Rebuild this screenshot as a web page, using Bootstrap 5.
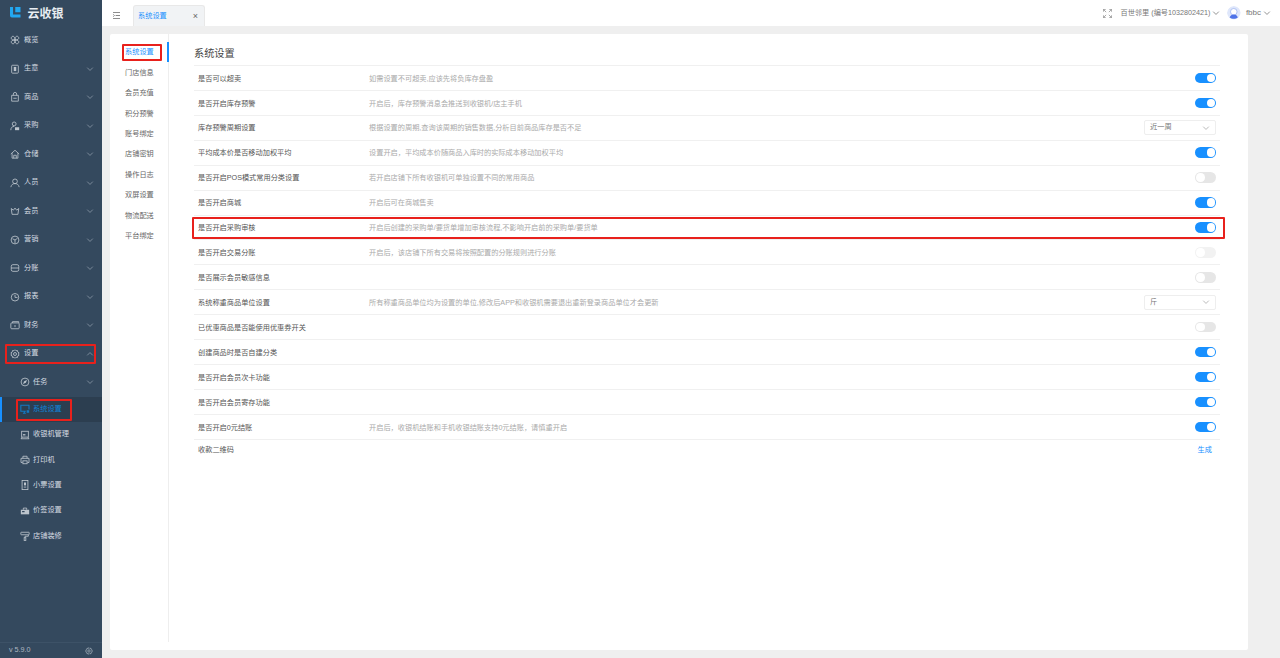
<!DOCTYPE html>
<html lang="zh-CN">
<head>
<meta charset="utf-8">
<title>系统设置</title>
<link rel="stylesheet" href="https://cdn.jsdelivr.net/npm/bootstrap@5.3.0/dist/css/bootstrap.min.css">
<style>
html,body{height:658px;overflow:hidden}
body{font-family:"Liberation Sans","Noto Sans CJK SC",sans-serif;font-size:7.2px;line-height:1.2;color:#555;background:#efefef}
svg{display:block;flex:none}
.shell{height:658px}
.side{width:102px;background:#34495e;color:#d5dbe1}
.logo{height:26px;padding:2px 0 0 10px;gap:7px;color:#e8edf2;font-size:12px;font-weight:700}
.logo-mark{width:10.500px;height:10.500px;margin-top:-3px}
.side-item{height:28.5px;padding:0 8px 0 10px;gap:4px}
.side-item .lbl{flex:1}
.side-item>svg:first-child,.side-sub>svg:first-child{opacity:.85}
.chev-s{color:#8b99a8}
.side-item.annot{position:relative}
.annot-a::after{content:"";position:absolute;left:5px;right:6px;top:4px;bottom:4px;border:2px solid #e8211c;border-radius:1px}
.side-sub{height:25.4px;padding:0 8px 0 19.5px;gap:3.500px;position:relative}
.side-sub.first{height:28.5px}
.side-sub.on{background:#2c3e50;color:#1084d8;box-shadow:inset 2px 0 0 #1890ff}
.annot-b::after{content:"";position:absolute;left:16px;width:56px;top:2px;bottom:1px;border:2px solid #e8211c;border-radius:1px}
.side-foot{height:16px;padding:0 9px;border-top:1px solid #3d5267;color:#aeb8c2}
.tab-pill{width:72px;height:21px;background:#f1f3f5;border:1px solid #e8e8e8;border-bottom:0;border-radius:3px 3px 0 0;padding:0 6px 0 4px;color:#1890ff}
.tab-x{font-size:9px;color:#666;line-height:1}
.top-right{padding-right:9px;color:#777}
.ava{width:13.500px;height:13.500px;border-radius:50%}
.main-wrap{padding:8px 32px 8px 8px;min-height:0}
.panel{background:#fff;border-radius:2px;min-height:0}
.inner-nav{width:59px;height:608px;border-right:1px solid #eee;padding-top:8.500px;position:relative;color:#666}
.inner-nav-item{height:20.4px;padding-left:15px;position:relative}
.inner-nav-item.on{color:#1890ff}
.inner-nav-item.on::before{content:"";position:absolute;right:-1px;top:-.5px;width:2px;height:20px;background:#1890ff}
.inner-nav-item.on::after{content:"";position:absolute;left:12px;width:40px;top:1.500px;height:16.500px;border:2px solid #e8211c;border-radius:1px}
.settings{margin-left:25px;width:1026px;padding-top:8px}
.set-title{font-size:10.2px;color:#444;height:23px;line-height:23px;font-weight:400}
.set-row{height:24.93px;border-top:1px solid #f0f0f0;padding:0 4px;position:relative;color:#555}
.set-name{width:171px;padding-top:2px}
.set-desc{flex:1;color:#aaa;padding-top:2px}
.annot-c::after{content:"";position:absolute;left:-2px;right:-5px;top:1px;bottom:0;border:2px solid #e8211c;border-radius:1px}
.tog{width:21px;height:10.5px;border-radius:6px;background:#1890ff;position:relative;flex:none}
.tog::after{content:"";position:absolute;right:1px;top:1px;width:8.5px;height:8.5px;border-radius:50%;background:#fff}
.tog.off{background:#e6e6e6}
.tog.off::after{right:auto;left:1px}
.tog.dim{background:#f2f2f2}
.sel{width:72px;height:15px;border:1px solid #eee;border-radius:2px;padding:0 5px;color:#777}
.sel svg{color:#aaa}
.set-link{color:#1890ff;padding-right:4px;padding-top:1px}
.set-last{border-top:1px solid #f0f0f0;height:20px;padding:0 4px}
.set-last>span:first-child{padding-top:1px}
</style>
</head>
<body>
<svg width="0" height="0" style="position:absolute">
<defs>
<symbol id="chev" viewBox="0 0 10 10"><path d="M1.5 3.3 5 6.8l3.5-3.5" fill="none" stroke="currentColor" stroke-width="1"/></symbol>
<symbol id="i-over" viewBox="0 0 12 12"><g fill="none" stroke="currentColor" stroke-width="1"><path d="M6 6C2 6 1.5 5 1.5 3.5S3 1.5 3.800 1.500 6 3 6 6C6 2 7.500 1.500 8.500 1.500S10.500 2.500 10.500 3.700 9.500 6 6 6C9.500 6 10.500 7 10.500 8.300S9.500 10.500 8.300 10.500 6 9.500 6 6C6 9.500 5 10.500 3.700 10.500S1.500 9.500 1.500 8.300 2.500 6 6 6Z"/></g></symbol>
<symbol id="i-biz" viewBox="0 0 12 12"><g fill="none" stroke="currentColor" stroke-width="1"><rect x="2" y="1.500" width="8" height="9.500" rx="1"/></g><rect x="4.500" y="3.500" width="3" height="5" fill="currentColor"/></symbol>
<symbol id="i-bag" viewBox="0 0 12 12"><g fill="none" stroke="currentColor" stroke-width="1"><path d="M2 4h8v7H2zM4 4V2.500a2 2 0 0 1 4 0V4M4 7.500h4"/></g></symbol>
<symbol id="i-buy" viewBox="0 0 12 12"><g fill="none" stroke="currentColor" stroke-width="1"><circle cx="5" cy="3.500" r="2.300"/><path d="M1 11c0-3 1.500-4.500 4-4.500"/></g><rect x="6" y="7.500" width="5" height="3.500" fill="currentColor"/></symbol>
<symbol id="i-home" viewBox="0 0 12 12"><g fill="none" stroke="currentColor" stroke-width="1"><path d="M1 6 6 1.500 11 6M2.500 5v6h7V5M4.500 11V7.500h3V11"/></g></symbol>
<symbol id="i-user" viewBox="0 0 12 12"><g fill="none" stroke="currentColor" stroke-width="1"><circle cx="6" cy="4" r="2.800"/><path d="M1 11c.5-3 2.500-4.300 5-4.300S10.500 8 11 11"/></g></symbol>
<symbol id="i-crown" viewBox="0 0 12 12"><g fill="none" stroke="currentColor" stroke-width="1"><path d="M1.500 3 4 5 6 2.500 8 5l2.500-2-1 7h-7z"/></g></symbol>
<symbol id="i-mkt" viewBox="0 0 12 12"><g fill="none" stroke="currentColor" stroke-width="1"><circle cx="6" cy="6" r="4.700"/><path d="M3 4.500 6 6l3-2M6 6v4"/></g></symbol>
<symbol id="i-db" viewBox="0 0 12 12"><g fill="none" stroke="currentColor" stroke-width="1"><rect x="1.500" y="2" width="9" height="8" rx="2"/><path d="M1.500 6h9"/></g></symbol>
<symbol id="i-clock" viewBox="0 0 12 12"><g fill="none" stroke="currentColor" stroke-width="1"><circle cx="6" cy="6.300" r="4.500"/><path d="M6 3.500v3h3"/></g></symbol>
<symbol id="i-wallet" viewBox="0 0 12 12"><g fill="none" stroke="currentColor" stroke-width="1"><rect x="1" y="3.500" width="10" height="7" rx="1"/><path d="M3 3.500V2h7.500v1.500M6 6v2.500"/></g></symbol>
<symbol id="i-gear" viewBox="0 0 12 12"><g fill="none" stroke="currentColor" stroke-width="1"><path d="M6 .9 7.200 2.100 9 1.900 9.300 3.700 10.900 4.600 10.100 6 10.900 7.400 9.300 8.300 9 10.100 7.200 9.900 6 11.100 4.800 9.900 3 10.100 2.700 8.300 1.100 7.400 1.900 6 1.100 4.600 2.700 3.700 3 1.900 4.800 2.100Z"/><circle cx="6" cy="6" r="1.800"/></g></symbol>
<symbol id="i-task" viewBox="0 0 12 12"><g fill="none" stroke="currentColor" stroke-width="1"><circle cx="6" cy="6" r="4.700"/></g><path d="M8.500 3.500 7 7 3.500 8.500 5 5z" fill="currentColor"/></symbol>
<symbol id="i-mon" viewBox="0 0 12 12"><g fill="none" stroke="currentColor" stroke-width="1.300"><path d="M10.800 6.500V1.500H1v7.200h6M3.500 11H7M5.200 9v2"/></g><rect x="8" y="7.500" width="3" height="3" fill="currentColor"/></symbol>
<symbol id="i-pos" viewBox="0 0 12 12"><g fill="none" stroke="currentColor" stroke-width="1"><rect x="2" y="1.500" width="8" height="7"/><path d="M1 10.500h10M2.500 8.500l-1 2M9.500 8.500l1 2"/></g><rect x="3.500" y="5" width="3" height="1.500" fill="currentColor"/></symbol>
<symbol id="i-print" viewBox="0 0 12 12"><g fill="none" stroke="currentColor" stroke-width="1"><path d="M3.500 4V1.500h5V4M3 9H1.200V4h9.600v5H9"/><rect x="3.500" y="7" width="5" height="3.500"/></g></symbol>
<symbol id="i-ticket" viewBox="0 0 12 12"><g fill="none" stroke="currentColor" stroke-width="1"><rect x="2.500" y=".5" width="7" height="11"/></g><rect x="4.800" y="3" width="2.400" height="3.500" fill="currentColor"/><path d="M4.500 8.500h3" stroke="currentColor"/></symbol>
<symbol id="i-tag" viewBox="0 0 12 12"><path d="M1 4.500h10V10H1z" fill="currentColor"/><path d="M4 4.500V2.500h4v2" fill="none" stroke="currentColor"/><rect x="2.500" y="6" width="3" height="1.500" fill="#34495e"/></symbol>
<symbol id="i-roll" viewBox="0 0 12 12"><g fill="none" stroke="currentColor" stroke-width="1"><rect x="1" y="1.500" width="10" height="3" rx=".5"/><path d="M10 4.500V6.300H6V8"/><rect x="5" y="8" width="2" height="3.300"/></g></symbol>
</defs>
</svg>
<div class="shell d-flex">
  <aside class="side d-flex flex-column flex-shrink-0">
    <div class="logo d-flex align-items-center">
      <svg class="logo-mark" viewBox="0 0 11 11"><path d="M0 0h3.200v7.800H11V11H2a2 2 0 0 1-2-2z" fill="#22a7f0"/><path d="M5.500 0H11v5.500H5.500z" fill="#22a7f0"/></svg>
      <span>云收银</span>
    </div>
    <nav class="flex-grow-1">
      <div class="side-item d-flex align-items-center"><svg width="10" height="10"><use href="#i-over"/></svg><span class="lbl">概览</span></div>
      <div class="side-item d-flex align-items-center"><svg width="10" height="10"><use href="#i-biz"/></svg><span class="lbl">生意</span><svg class="chev-s" width="8" height="8"><use href="#chev"/></svg></div>
      <div class="side-item d-flex align-items-center"><svg width="10" height="10"><use href="#i-bag"/></svg><span class="lbl">商品</span><svg class="chev-s" width="8" height="8"><use href="#chev"/></svg></div>
      <div class="side-item d-flex align-items-center"><svg width="10" height="10"><use href="#i-buy"/></svg><span class="lbl">采购</span><svg class="chev-s" width="8" height="8"><use href="#chev"/></svg></div>
      <div class="side-item d-flex align-items-center"><svg width="10" height="10"><use href="#i-home"/></svg><span class="lbl">仓储</span><svg class="chev-s" width="8" height="8"><use href="#chev"/></svg></div>
      <div class="side-item d-flex align-items-center"><svg width="10" height="10"><use href="#i-user"/></svg><span class="lbl">人员</span><svg class="chev-s" width="8" height="8"><use href="#chev"/></svg></div>
      <div class="side-item d-flex align-items-center"><svg width="10" height="10"><use href="#i-crown"/></svg><span class="lbl">会员</span><svg class="chev-s" width="8" height="8"><use href="#chev"/></svg></div>
      <div class="side-item d-flex align-items-center"><svg width="10" height="10"><use href="#i-mkt"/></svg><span class="lbl">营销</span><svg class="chev-s" width="8" height="8"><use href="#chev"/></svg></div>
      <div class="side-item d-flex align-items-center"><svg width="10" height="10"><use href="#i-db"/></svg><span class="lbl">分账</span><svg class="chev-s" width="8" height="8"><use href="#chev"/></svg></div>
      <div class="side-item d-flex align-items-center"><svg width="10" height="10"><use href="#i-clock"/></svg><span class="lbl">报表</span><svg class="chev-s" width="8" height="8"><use href="#chev"/></svg></div>
      <div class="side-item d-flex align-items-center"><svg width="10" height="10"><use href="#i-wallet"/></svg><span class="lbl">财务</span><svg class="chev-s" width="8" height="8"><use href="#chev"/></svg></div>
      <div class="side-item annot annot-a d-flex align-items-center"><svg width="10" height="10"><use href="#i-gear"/></svg><span class="lbl">设置</span><svg class="chev-s" width="8" height="8" style="transform:rotate(180deg)"><use href="#chev"/></svg></div>
      <div class="side-sub first d-flex align-items-center"><svg width="10" height="10"><use href="#i-task"/></svg><span class="lbl flex-grow-1">任务</span><svg class="chev-s" width="8" height="8"><use href="#chev"/></svg></div>
      <div class="side-sub on annot-b d-flex align-items-center"><svg width="10" height="10"><use href="#i-mon"/></svg><span>系统设置</span></div>
      <div class="side-sub d-flex align-items-center"><svg width="10" height="10"><use href="#i-pos"/></svg><span>收银机管理</span></div>
      <div class="side-sub d-flex align-items-center"><svg width="10" height="10"><use href="#i-print"/></svg><span>打印机</span></div>
      <div class="side-sub d-flex align-items-center"><svg width="10" height="10"><use href="#i-ticket"/></svg><span>小票设置</span></div>
      <div class="side-sub d-flex align-items-center"><svg width="10" height="10"><use href="#i-tag"/></svg><span>价签设置</span></div>
      <div class="side-sub d-flex align-items-center"><svg width="10" height="10"><use href="#i-roll"/></svg><span>店铺装修</span></div>
    </nav>
    <div class="side-foot d-flex align-items-center justify-content-between"><span>v 5.9.0</span><svg width="8" height="8"><use href="#i-gear"/></svg></div>
  </aside>
  <div class="flex-grow-1 d-flex flex-column" style="min-width:0">
    <header class="d-flex align-items-end justify-content-between bg-white" style="height:26px">
      <div class="d-flex align-items-end">
        <svg width="7" height="7" viewBox="0 0 8 8" class="align-self-center" style="margin-left:11px"><path d="M0 .5h8M3 4h5M0 7.500h8M0 2.500 1.500 4 0 5.500" fill="none" stroke="#666" stroke-width=".9"/></svg>
        <div class="tab-pill d-flex align-items-center justify-content-between" style="margin-left:13px"><span>系统设置</span><span class="tab-x">×</span></div>
      </div>
      <div class="top-right d-flex align-items-center align-self-center">
        <svg width="9" height="9" viewBox="0 0 10 10" style="margin-right:8px"><path d="M.5 3V.5H3M7 .5h2.500V3M9.500 7v2.500H7M3 9.500H.5V7M.5.5l3 3M9.500.5l-3 3M9.500 9.500l-3-3M.5 9.500l3-3" fill="none" stroke="#888" stroke-width=".8"/></svg>
        <span>百世邻里 (编号1032802421)</span>
        <svg width="8" height="8" style="margin-left:2px;margin-right:7px"><use href="#chev"/></svg>
        <svg class="ava" viewBox="0 0 14 14"><circle cx="7" cy="7" r="7" fill="#dfe7fb"/><circle cx="7" cy="6" r="3.400" fill="#fff" stroke="#8fa8ee" stroke-width=".7"/><path d="M2.800 12c.5-2.400 2.200-3.200 4.200-3.200s3.700.8 4.200 3.200c-2 1.700-6.400 1.700-8.400 0z" fill="#4f73e8"/></svg>
        <span style="margin-left:5px;font-size:8px">fbbc</span>
        <svg width="8" height="8" style="margin-left:2px"><use href="#chev"/></svg>
      </div>
    </header>
    <main class="main-wrap flex-grow-1 d-flex">
      <div class="panel flex-grow-1 d-flex">
        <nav class="inner-nav flex-shrink-0">
          <div class="inner-nav-item on d-flex align-items-center">系统设置</div>
          <div class="inner-nav-item d-flex align-items-center">门店信息</div>
          <div class="inner-nav-item d-flex align-items-center">会员充值</div>
          <div class="inner-nav-item d-flex align-items-center">积分预警</div>
          <div class="inner-nav-item d-flex align-items-center">账号绑定</div>
          <div class="inner-nav-item d-flex align-items-center">店铺密钥</div>
          <div class="inner-nav-item d-flex align-items-center">操作日志</div>
          <div class="inner-nav-item d-flex align-items-center">双屏设置</div>
          <div class="inner-nav-item d-flex align-items-center">物流配送</div>
          <div class="inner-nav-item d-flex align-items-center">平台绑定</div>
        </nav>
        <section class="settings">
          <h1 class="set-title m-0">系统设置</h1>
          <div class="set-row d-flex align-items-center"><span class="set-name">是否可以超卖</span><span class="set-desc">如需设置不可超卖,应该先将负库存盘盈</span><span class="tog"></span></div>
          <div class="set-row d-flex align-items-center"><span class="set-name">是否开启库存预警</span><span class="set-desc">开启后，库存预警消息会推送到收银机/店主手机</span><span class="tog"></span></div>
          <div class="set-row d-flex align-items-center"><span class="set-name">库存预警周期设置</span><span class="set-desc">根据设置的周期,查询该周期的销售数据,分析目前商品库存是否不足</span><span class="sel d-flex align-items-center justify-content-between"><span>近一周</span><svg width="8" height="8"><use href="#chev"/></svg></span></div>
          <div class="set-row d-flex align-items-center"><span class="set-name">平均成本价是否移动加权平均</span><span class="set-desc">设置开启，平均成本价随商品入库时的实际成本移动加权平均</span><span class="tog"></span></div>
          <div class="set-row d-flex align-items-center"><span class="set-name">是否开启POS模式常用分类设置</span><span class="set-desc">若开启店铺下所有收银机可单独设置不同的常用商品</span><span class="tog off"></span></div>
          <div class="set-row d-flex align-items-center"><span class="set-name">是否开启商城</span><span class="set-desc">开启后可在商城售卖</span><span class="tog"></span></div>
          <div class="set-row annot-c d-flex align-items-center"><span class="set-name">是否开启采购审核</span><span class="set-desc">开启后创建的采购单/要货单增加审核流程,不影响开启前的采购单/要货单</span><span class="tog"></span></div>
          <div class="set-row d-flex align-items-center"><span class="set-name">是否开启交易分账</span><span class="set-desc">开启后，该店铺下所有交易将按照配置的分账规则进行分账</span><span class="tog off dim"></span></div>
          <div class="set-row d-flex align-items-center"><span class="set-name">是否展示会员敏感信息</span><span class="set-desc"></span><span class="tog off"></span></div>
          <div class="set-row d-flex align-items-center"><span class="set-name">系统称重商品单位设置</span><span class="set-desc">所有称重商品单位均为设置的单位,修改后APP和收银机需要退出重新登录商品单位才会更新</span><span class="sel d-flex align-items-center justify-content-between"><span>斤</span><svg width="8" height="8"><use href="#chev"/></svg></span></div>
          <div class="set-row d-flex align-items-center"><span class="set-name">已优惠商品是否能使用优惠券开关</span><span class="set-desc"></span><span class="tog off"></span></div>
          <div class="set-row d-flex align-items-center"><span class="set-name">创建商品时是否自建分类</span><span class="set-desc"></span><span class="tog"></span></div>
          <div class="set-row d-flex align-items-center"><span class="set-name">是否开启会员次卡功能</span><span class="set-desc"></span><span class="tog"></span></div>
          <div class="set-row d-flex align-items-center"><span class="set-name">是否开启会员寄存功能</span><span class="set-desc"></span><span class="tog"></span></div>
          <div class="set-row d-flex align-items-center"><span class="set-name">是否开启0元结账</span><span class="set-desc">开启后，收银机结账和手机收银结账支持0元结账，请慎重开启</span><span class="tog"></span></div>
          <div class="set-last d-flex align-items-center justify-content-between"><span>收款二维码</span><span class="set-link">生成</span></div>
        </section>
      </div>
    </main>
  </div>
</div>
<script src="https://cdn.jsdelivr.net/npm/bootstrap@5.3.0/dist/js/bootstrap.bundle.min.js"></script>
</body>
</html>
